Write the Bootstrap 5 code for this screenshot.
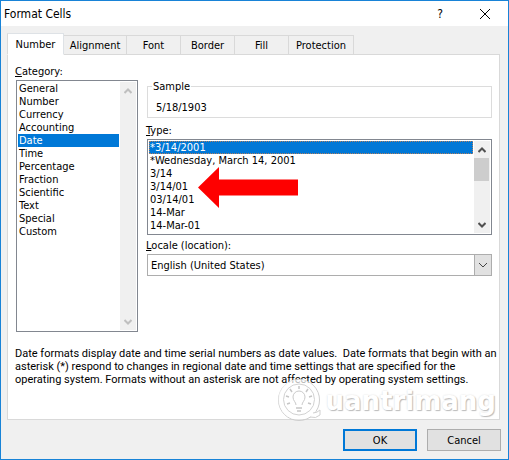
<!DOCTYPE html>
<html lang="en">
<head>
<meta charset="utf-8">
<meta name="viewport" content="width=device-width, initial-scale=1">
<title>Format Cells</title>
<link href="https://cdn.jsdelivr.net/npm/bootstrap@5.3.0/dist/css/bootstrap.min.css" rel="stylesheet">
<style>
  body { font: 11px/13px "DejaVu Sans Condensed", "DejaVu Sans", sans-serif; color: #000; }
  .dialog { border: 1px solid #1883d7; background: #f0f0f0; }
  .titlebar { height: 25px; padding: 0 16px 0 3px; background: #fff; }
  .titlebar-title { font-size: 12px; line-height: 16px; font-weight: 400; }
  .titlebar-button { border: 0; background: none; padding: 0; width: 14px; height: 16px; font-size: 12px; line-height: 16px; color: #000; }
  .titlebar-actions { gap: 31px; }
  .sheet-area { padding: 7px 8px 0 6px; }
  .sheet-tabs { border: 0; position: relative; z-index: 1; }
  .sheet-tabs .nav-link { height: 20px; width: 54px; padding: 1px 0 0; border: 1px solid #d9d9d9; border-left: 0; border-radius: 0; margin: 0; color: #000; background: #f0f0f0; }
  .sheet-tabs .nav-link.active { height: 22px; width: 57px; border-left: 1px solid #d9d9d9; border-bottom-color: #fff; background: #fff; color: #000; }
  .sheet-tabs .tab-wide { width: 63px; }
  .sheet-tabs .tab-last { width: 65px; }
  .sheet { background: #fff; border: 1px solid #d9d9d9; margin-top: -1px; padding: 10px 7px 16px 8px; }
  .field-label { display: block; line-height: 13px; margin: 0 0 2px -1px; }
  .category-col { width: 122px; }
  .format-col { margin-left: 9px; }
  .listbox { border: 1px solid #828790; padding: 1px; background: #fff; }
  .listbox select { appearance: none; border: 0; outline: 0; padding: 0; margin: 0; overflow: hidden; background: #fff; color: #000; font: inherit; border-radius: 0; min-width: 0; }
  .listbox option { padding: 0 0 0 1px; min-height: 13px; height: 13px; line-height: 13px; color: #000; }
  .listbox option:checked { background: #0078d7 linear-gradient(#0078d7, #0078d7); color: #fff; }
  .category-list { height: 248px; }
  .type-list { height: 92px; }
  .type-list option:checked { outline: 1px dotted #b08060; outline-offset: -1px; }
  .scroll-track { width: 16px; background: #f0f0f0; margin-left: 1px; }
  .scroll-track button { border: 0; padding: 0; background: none; height: 17px; color: #505050; }
  .scroll-track button:disabled { color: #bfbfbf; }
  .scroll-thumb { height: 23px; width: 15px; background: #cdcdcd; }
  .sample-box { border: 1px solid #dcdcdc; height: 38px; margin: 15px 0 6px; padding: 0 8px; }
  .sample-box legend { font-size: 11px; line-height: 13px; width: auto; float: none; margin: 0 0 0 -4px; padding: 0 1px; }
  .sample-box output { line-height: 13px; margin-top: 8px; }
  .type-box { margin-bottom: 4px; }
  .pointer-arrow { left: 50px; top: 27px; pointer-events: none; }
  .locale-select { border: 1px solid #adadad; height: 22px; border-radius: 0; padding: 0 20px 0 3px; font: inherit; color: #000; background: #fff; appearance: none; }
  .locale-arrow { width: 18px; border: 1px solid #adadad; background: #e1e1e1; pointer-events: none; }
  .description { font-family: Roboto, sans-serif; margin: 15px -8px 0 -1px; white-space: pre-wrap; }
  .dialog-actions { padding: 9px 7px 8px; gap: 10px; }
  .dialog-button { width: 74px; height: 22px; padding: 0; border-radius: 0; font: inherit; background: #e1e1e1; border: 1px solid #adadad; color: #000; }
  .dialog-button.is-default { border: 2px solid #0078d7; }
  .brand-mark { right: 12px; bottom: 36px; z-index: 2; pointer-events: none; }
  .brand-name { font: 700 26px/32px "DejaVu Sans", sans-serif; color: #fff; text-shadow: 1px 1px 1px #bbb, 0 0 2px #ddd; margin-left: 3px; }
</style>
</head>
<body>
<main class="dialog position-relative min-vh-100 d-flex flex-column" role="dialog" aria-labelledby="title">
  <header class="titlebar d-flex align-items-center">
    <h1 class="titlebar-title m-0 me-auto" id="title">Format Cells</h1>
    <div class="titlebar-actions d-flex">
      <button class="titlebar-button" type="button" aria-label="Help">?</button>
      <button class="titlebar-button d-flex align-items-center justify-content-center" type="button" aria-label="Close">
        <svg width="12" height="12" viewBox="0 0 12 12" fill="none" stroke="#000"><path d="M1 1 11 11M11 1 1 11"/></svg>
      </button>
    </div>
  </header>

  <div class="sheet-area flex-grow-1 d-flex flex-column">
    <div class="sheet-tabs nav nav-tabs align-items-end" role="tablist">
      <button class="nav-link active" type="button" role="tab" aria-selected="true">Number</button>
      <button class="nav-link tab-wide" type="button" role="tab">Alignment</button>
      <button class="nav-link" type="button" role="tab">Font</button>
      <button class="nav-link" type="button" role="tab">Border</button>
      <button class="nav-link" type="button" role="tab">Fill</button>
      <button class="nav-link tab-last" type="button" role="tab">Protection</button>
    </div>

    <section class="sheet flex-grow-1" role="tabpanel">
      <div class="d-flex">
        <div class="category-col flex-shrink-0">
          <label class="field-label" for="category"><u>C</u>ategory:</label>
          <div class="listbox d-flex">
            <select class="category-list flex-grow-1" id="category" size="12">
              <option>General</option>
              <option>Number</option>
              <option>Currency</option>
              <option>Accounting</option>
              <option selected>Date</option>
              <option>Time</option>
              <option>Percentage</option>
              <option>Fraction</option>
              <option>Scientific</option>
              <option>Text</option>
              <option>Special</option>
              <option>Custom</option>
            </select>
            <div class="scroll-track d-flex flex-column justify-content-between">
              <button type="button" disabled aria-label="Scroll up"><svg class="d-block mx-auto" width="8" height="6" viewBox="0 0 8 6" fill="none" stroke="currentColor" stroke-width="2"><path d="M.5 5 4 1.5 7.5 5"/></svg></button>
              <button type="button" disabled aria-label="Scroll down"><svg class="d-block mx-auto" width="8" height="6" viewBox="0 0 8 6" fill="none" stroke="currentColor" stroke-width="2"><path d="M.5 1 4 4.5 7.5 1"/></svg></button>
            </div>
          </div>
        </div>

        <div class="format-col flex-grow-1">
          <fieldset class="sample-box">
            <legend>Sample</legend>
            <output class="d-block">5/18/1903</output>
          </fieldset>

          <label class="field-label" for="type"><u>T</u>ype:</label>
          <div class="type-box listbox d-flex position-relative">
            <select class="type-list flex-grow-1" id="type" size="7">
              <option selected>*3/14/2001</option>
              <option>*Wednesday, March 14, 2001</option>
              <option>3/14</option>
              <option>3/14/01</option>
              <option>03/14/01</option>
              <option>14-Mar</option>
              <option>14-Mar-01</option>
            </select>
            <div class="scroll-track d-flex flex-column">
              <button type="button" aria-label="Scroll up"><svg class="d-block mx-auto" width="8" height="6" viewBox="0 0 8 6" fill="none" stroke="currentColor" stroke-width="2"><path d="M.5 5 4 1.5 7.5 5"/></svg></button>
              <div class="scroll-thumb"></div>
              <button class="mt-auto" type="button" aria-label="Scroll down"><svg class="d-block mx-auto" width="8" height="6" viewBox="0 0 8 6" fill="none" stroke="currentColor" stroke-width="2"><path d="M.5 1 4 4.5 7.5 1"/></svg></button>
            </div>
            <svg class="pointer-arrow position-absolute" width="100" height="41" viewBox="0 0 100 41" aria-hidden="true"><path fill="#fe0000" d="M0 20.5 21 0v12.500h79v16H21V41z"/></svg>
          </div>

          <label class="field-label" for="locale"><u>L</u>ocale (location):</label>
          <div class="position-relative">
            <select class="locale-select w-100 d-block" id="locale">
              <option>English (United States)</option>
            </select>
            <span class="locale-arrow position-absolute top-0 end-0 h-100 d-flex align-items-center justify-content-center">
              <svg width="10" height="6" viewBox="0 0 10 6" fill="none" stroke="#444"><path d="M1 1 5 5 9 1"/></svg>
            </span>
          </div>
        </div>
      </div>

      <p class="description mb-0">Date formats display date and time serial numbers as date values.  Date formats that begin with an
asterisk (*) respond to changes in regional date and time settings that are specified for the
operating system. Formats without an asterisk are not affected by operating system settings.</p>
    </section>
  </div>

  <footer class="dialog-actions d-flex justify-content-end">
    <button class="dialog-button is-default" type="button">OK</button>
    <button class="dialog-button" type="button">Cancel</button>
  </footer>

  <div class="brand-mark position-absolute d-flex align-items-center">
    <svg width="46" height="44" viewBox="0 0 46 44" fill="none" aria-hidden="true">
      <circle cx="22" cy="21" r="20.5" stroke="#cecece"/>
      <circle cx="21.5" cy="20.5" r="18" stroke="#fff" stroke-width="4" stroke-opacity=".7"/>
      <path d="M36 34q4 0 7-3v5q-4 4-10 2" fill="#fff" stroke="#d0d0d0"/>
      <circle cx="22" cy="20.5" r="15.5" stroke="#d2d2d2"/>
      <path d="M19 26c0-3-3-4-3-8a6 6 0 0 1 12 0c0 4-3 5-3 8" stroke="#cacaca"/>
      <path d="M22 7v3M13 10l2 3M31 10l-2 3M9 17l3 1M35 17l-3 1M10 25l3-1M34 25l-3-1M19 29h6M20 32h4" stroke="#c6c6c6" stroke-width="1.5"/>
    </svg>
    <span class="brand-name">uantrimang</span>
  </div>
</main>
<script src="https://cdn.jsdelivr.net/npm/bootstrap@5.3.0/dist/js/bootstrap.bundle.min.js"></script>
</body>
</html>
